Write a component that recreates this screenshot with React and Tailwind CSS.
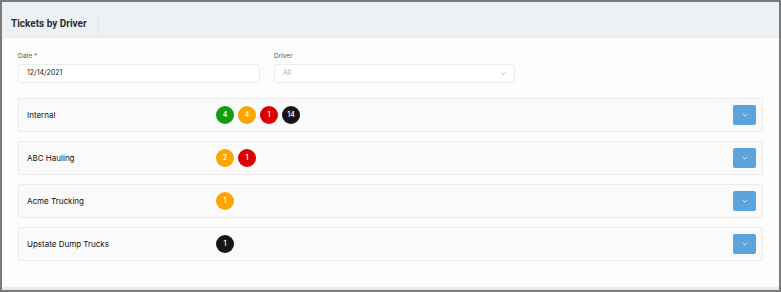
import React from "react";

const rows = [
  { name: "Internal", counts: [["bg-[#109d0f]", 4], ["bg-[#ffa500]", 4], ["bg-[#dd0000]", 1], ["bg-[#151515]", 14]] },
  { name: "ABC Hauling", counts: [["bg-[#ffa500]", 2], ["bg-[#dd0000]", 1]] },
  { name: "Acme Trucking", counts: [["bg-[#ffa500]", 1]] },
  { name: "Upstate Dump Trucks", counts: [["bg-[#151515]", 1]] },
];

const Chevron = ({ className }) => (
  <svg viewBox="0 0 10 6" className={className} fill="none" stroke="currentColor" strokeWidth="1.2">
    <path d="M1 1l4 4 4-4" />
  </svg>
);

const App = () => {
  return (
    <div className="w-[781px] h-[292px] bg-[#fdfdfd] border-2 border-[#7b7b7b] flex flex-col font-['Inter',sans-serif] overflow-hidden">
      {/* header */}
      <div className="h-[36px] bg-[#edf1f5] border-b border-[#e3e8ee] flex items-end">
        <div className="h-[25px] pl-[9px] pr-[11px] border-r border-[#e2e6ea] flex items-center">
          <h2 className="text-[10px] font-bold text-[#2b2f33] font-['Roboto',sans-serif] leading-[12px] mb-[2px]">Tickets by Driver</h2>
        </div>
      </div>

      <div className="flex-1 bg-[#fdfdfd] px-[16px] pt-[13px]">
        {/* filters */}
        <div className="flex gap-[14px]">
          <div className="w-[242px]">
            <label className="block text-[6.5px] text-[#555] leading-[10px] mb-[3px]">
              Date <span className="text-[#e04040]">*</span>
            </label>
            <div className="h-[19px] bg-white border border-[#ececec] rounded-[3px] flex items-center px-[8px] text-[7px] text-[#222]">
              12/14/2021
            </div>
          </div>
          <div className="w-[241px]">
            <label className="block text-[6.5px] text-[#555] leading-[10px] mb-[3px]">Driver</label>
            <div className="h-[19px] bg-white border border-[#ececec] rounded-[3px] flex items-center justify-between px-[8px] text-[7px] text-[#aaa]">
              <span>All</span>
              <Chevron className="w-[5px] h-[3px] text-[#888]" />
            </div>
          </div>
        </div>

        {/* rows */}
        <div className="mt-[15px] flex flex-col gap-[9px]">
          {rows.map((r) => (
            <div key={r.name} className="h-[34px] bg-[#fafafa] border border-[#ebebeb] rounded-[2px] flex items-center pl-[8px] pr-[6px]">
              <div className="w-[189px] text-[8px] font-normal text-[#111]">{r.name}</div>
              <div className="flex gap-[4px] flex-1">
                {r.counts.map(([c, n], i) => (
                  <span key={i} className={`${c} w-[18px] h-[18px] rounded-full text-white text-[7px] font-medium flex items-center justify-center`}>
                    {n}
                  </span>
                ))}
              </div>
              <button className="w-[23px] h-[20px] bg-[#5ba3dd] rounded-[2px] flex items-center justify-center">
                <Chevron className="w-[6px] h-[4px] text-white" />
              </button>
            </div>
          ))}
        </div>
      </div>
      <div className="h-[3px] bg-[#e8ebee]" />
    </div>
  );
};

export default App;
